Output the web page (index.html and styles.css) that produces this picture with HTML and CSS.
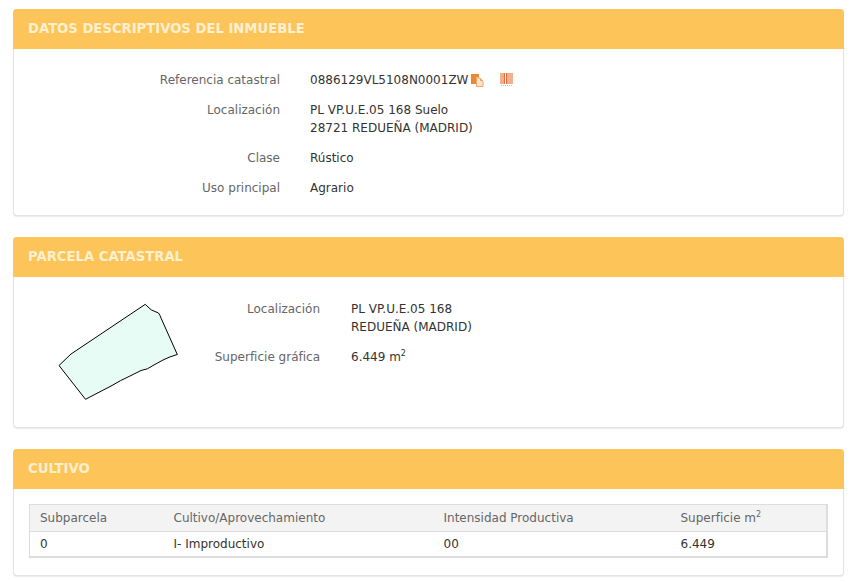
FILE: index.html
```html
<!DOCTYPE html>
<html lang="es">

<head>
  <meta charset="UTF-8">
  <title>Datos descriptivos del inmueble</title>
  <link rel="stylesheet" href="styles.css">
</head>

<body>
  <section class="panel">
    <h2 class="panel_title">DATOS DESCRIPTIVOS DEL INMUEBLE</h2>
    <div class="panel_body data_list">
      <div class="row">
        <span class="label">Referencia catastral</span>
        <span class="value ref_value">0886129VL5108N0001ZW
          <svg class="icon icon_copy" width="13" height="14" viewBox="0 0 13 14">
            <path d="M0 1h8v3.500H5V11H0z" fill="#ea8a30" />
            <path d="M5.500 5H9l3 3v5.500H5.500z" fill="#fbe3cf" stroke="#eda873" stroke-width="1" />
            <path d="M9 5v3h3z" fill="#f0a868" />
          </svg>
          <svg class="icon icon_barcode" width="13" height="14" viewBox="0 0 13 14">
            <path d="M1 0v11M3 0v11M4.500 0v11M6.500 0v11M8 0v11M10 0v11M12 0v11" stroke="#e2703a" stroke-width="1.100" />
            <path d="M1 12.500h11" stroke="#eeb08c" stroke-width="1" stroke-dasharray="1 1" />
          </svg>
        </span>
      </div>
      <div class="row">
        <span class="label">Localización</span>
        <span class="value">PL VP.U.E.05 168 Suelo<br>28721 REDUEÑA (MADRID)</span>
      </div>
      <div class="row">
        <span class="label">Clase</span>
        <span class="value">Rústico</span>
      </div>
      <div class="row">
        <span class="label">Uso principal</span>
        <span class="value">Agrario</span>
      </div>
    </div>
  </section>

  <section class="panel">
    <h2 class="panel_title">PARCELA CATASTRAL</h2>
    <div class="panel_body parcel">
      <svg class="parcel_map" width="180" height="120" viewBox="0 0 180 120">
        <path d="M125.300 14.300 L128 17 Q131 20.500 135 21.500 L138.500 23 Q140 25 141 28 L157.300 64.500 Q150 66.500 143 70 L133 75.500 Q128 79.500 121 80.500 L110 86 Q100 90.500 92 95.500 L65.500 109.300 L39 75.500 L51 64 Z"
          fill="#e8fcf6" stroke="#000" stroke-width="1" />
      </svg>
      <div class="parcel_data">
        <div class="row">
          <span class="label">Localización</span>
          <span class="value">PL VP.U.E.05 168<br>REDUEÑA (MADRID)</span>
        </div>
        <div class="row">
          <span class="label">Superficie gráfica</span>
          <span class="value">6.449 m<sup>2</sup></span>
        </div>
      </div>
    </div>
  </section>

  <section class="panel">
    <h2 class="panel_title">CULTIVO</h2>
    <div class="panel_body crops">
      <table class="crop_table">
        <thead>
          <tr>
            <th class="col_sub">Subparcela</th>
            <th class="col_crop">Cultivo/Aprovechamiento</th>
            <th class="col_int">Intensidad Productiva</th>
            <th>Superficie m<sup>2</sup></th>
          </tr>
        </thead>
        <tbody>
          <tr>
            <td>0</td>
            <td>I- Improductivo</td>
            <td>00</td>
            <td>6.449</td>
          </tr>
        </tbody>
      </table>
    </div>
  </section>
</body>

</html>
```

FILE: styles.css
```css
* {
  box-sizing: border-box;
}

body {
  margin: 0;
  padding: 9px 13px 0;
  background: white;
  font-family: 'DejaVu Sans', Verdana, sans-serif;
  font-size: 12px;
  color: #333;
}

.panel {
  margin-bottom: 21px;
  background: white;
  border: 1px solid #e3e3e3;
  border-top: 0;
  border-radius: 4px;
  box-shadow: 0 1px 1px rgba(0, 0, 0, .08);
}

.panel_title {
  height: 40px;
  margin: 0 -1px;
  padding: 0 15px;
  background-color: #fdc45a;
  border-radius: 4px 4px 0 0;
  color: #fff0cf;
  font-size: 13.2px;
  font-weight: 700;
  line-height: 40px;
}

.data_list {
  height: 166px;
  padding-top: 22px;
}

.row {
  display: flex;
  margin-bottom: 12px;
  line-height: 18px;
}

.label {
  width: 266px;
  color: #666;
  text-align: right;
}

.value {
  flex: 1;
  margin-left: 30px;
  color: #333;
}

.ref_value {
  display: flex;
  align-items: center;
}

.icon {
  flex: none;
}

.icon_copy {
  margin-left: 3px;
}

.icon_barcode {
  margin-left: 16px;
}

.value sup,
.crop_table sup {
  font-size: 8px;
  line-height: 0;
}

.parcel {
  display: flex;
  height: 150px;
}

.parcel_map {
  flex: none;
  margin-top: 13px;
  margin-left: 6px;
}

.parcel_data {
  flex: 1;
  padding-top: 23px;
}

.parcel_data .label {
  width: 120px;
}

.parcel_data .value {
  margin-left: 31px;
}

.crops {
  padding: 15px 15px 17px;
}

.crop_table {
  width: 100%;
  border-collapse: collapse;
  border: 1px solid #ddd;
  border-bottom-width: 2px;
  border-right-width: 2px;
  table-layout: fixed;
}

.crop_table th {
  height: 27px;
  padding: 0 10px;
  background-color: #f3f3f3;
  border-bottom: 1px solid #ddd;
  color: #666;
  font-weight: 400;
  text-align: left;
}

.crop_table td {
  height: 25px;
  padding: 0 10px;
  color: #333;
}

.col_sub {
  width: 134px;
}

.col_crop {
  width: 270px;
}

.col_int {
  width: 237px;
}
```
